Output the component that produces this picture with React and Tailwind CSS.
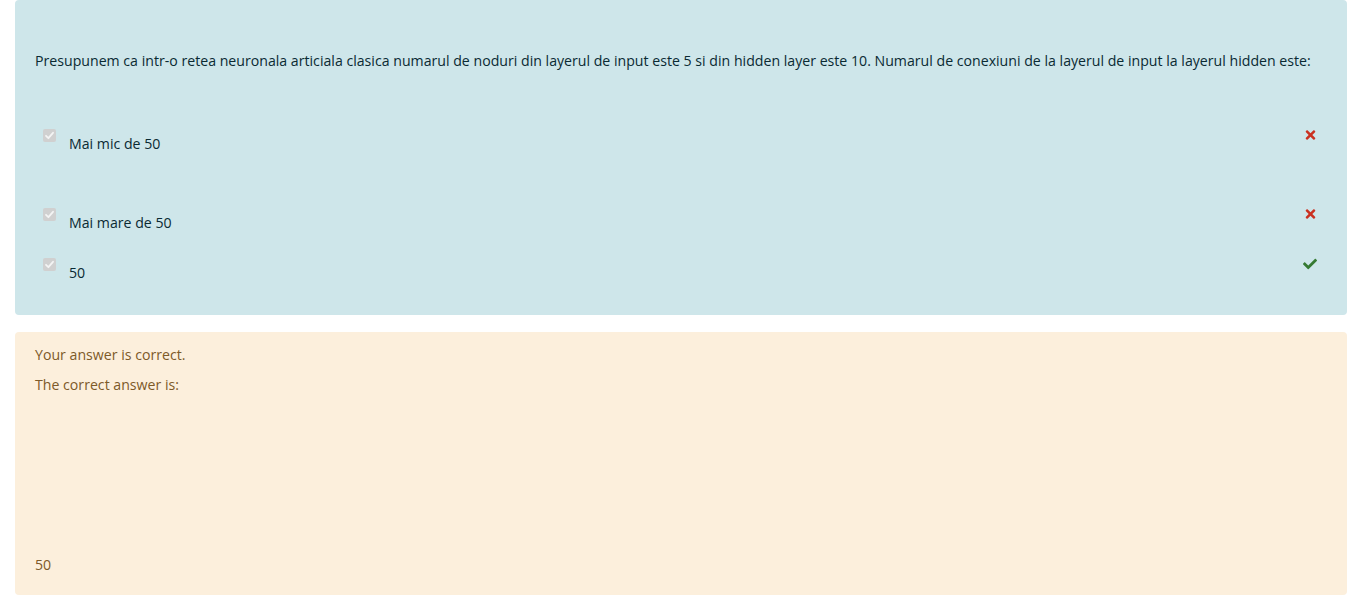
import React from "react";
import { FaTimes, FaCheck } from "react-icons/fa";

function Box() {
  return (
    <svg width="13" height="13" viewBox="0 0 13 13" className="shrink-0">
      <rect x="0" y="0" width="13" height="13" rx="2" fill="#d0d0d0" />
      <path d="M3 6.8 L5.4 9.2 L10 3.8" stroke="#f4f4f4" strokeWidth="1.8" fill="none" strokeLinecap="round" strokeLinejoin="round" />
    </svg>
  );
}

function Option({ label, correct, className }) {
  return (
    <div className={"flex items-start pl-[8px] pr-[10px] " + className}>
      <Box />
      <span className="ml-[13px] mt-[5px] leading-[20px]">{label}</span>
      <span className="ml-auto mt-[-1px]">
        {correct ? (
          <FaCheck className="text-[#357a32] w-[14px] h-[14px]" />
        ) : (
          <FaTimes className="text-[#ca3120] w-[13px] h-[14px]" />
        )}
      </span>
    </div>
  );
}

export default function App() {
  return (
    <div
      className="bg-white w-[1362px] h-[609px] px-[15px] text-[14.15px]"
      style={{ fontFamily: '"Open Sans", "Noto Sans", sans-serif' }}
    >
      <div className="bg-[#cee6ea] text-[#0a2a33] rounded-[4px] px-[20px] pt-[50px] pb-[32px]">
        <p className="leading-[22px] whitespace-nowrap">
          Presupunem ca intr-o retea neuronala articiala clasica numarul de noduri din layerul de input este 5 si din hidden layer este 10. Numarul de conexiuni de la layerul de input la layerul hidden este:
        </p>
        <Option className="mt-[57px]" label="Mai mic de 50" />
        <Option className="mt-[54px]" label="Mai mare de 50" />
        <Option className="mt-[25px]" label="50" correct />
      </div>
      <div className="mt-[17px] bg-[#fcefdc] text-[#7d5a29] rounded-[4px] px-[20px] pt-[12px] pb-[19px] h-[263px] flex flex-col">
        <p className="leading-[22px]">Your answer is correct.</p>
        <p className="leading-[22px] mt-[8px]">The correct answer is:</p>
        <p className="leading-[22px] mt-auto">50</p>
      </div>
    </div>
  );
}
